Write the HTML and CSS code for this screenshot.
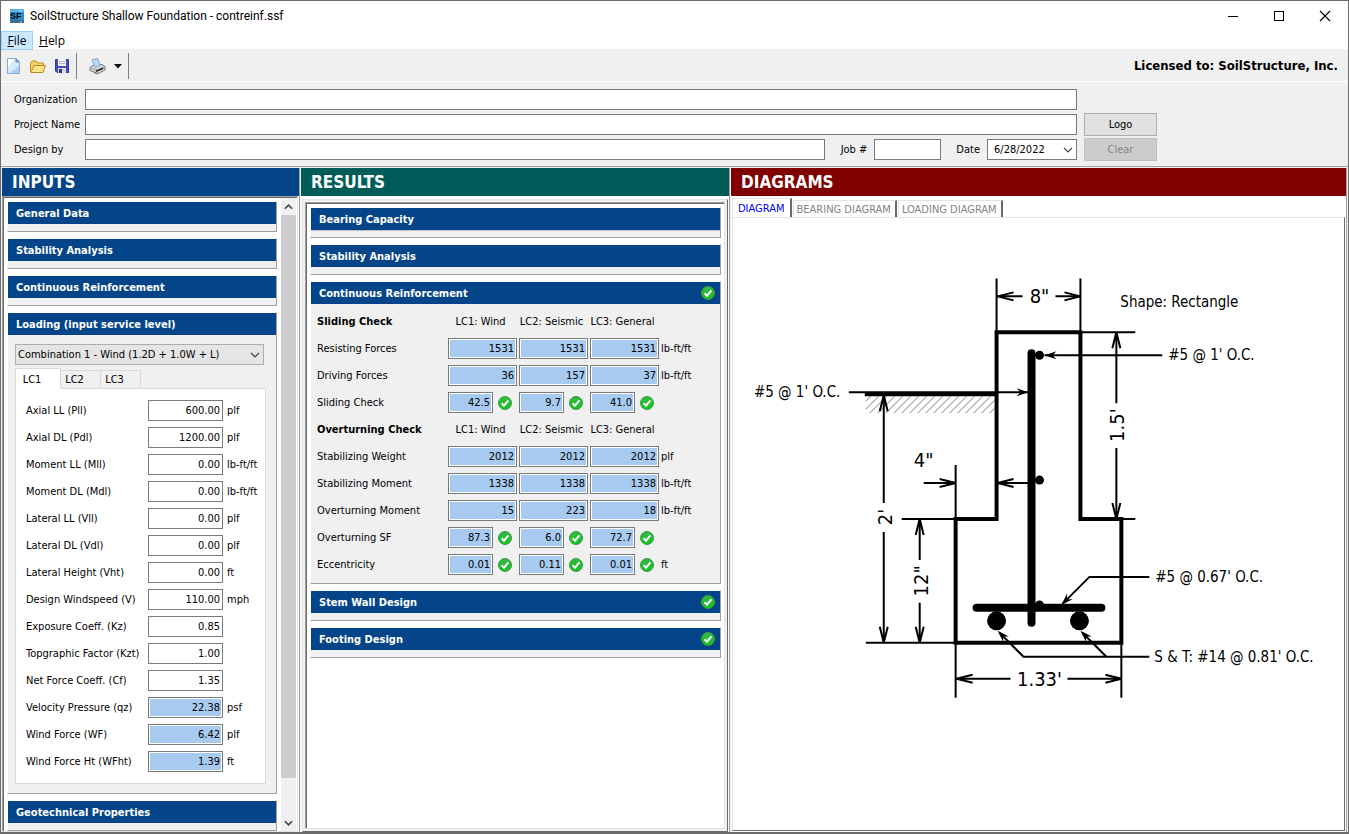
FILE: index.html
```html
<!DOCTYPE html>
<html lang="en">
<head>
<meta charset="utf-8">
<title>SoilStructure Shallow Foundation - contreinf.ssf</title>
<link rel="stylesheet" href="styles.css">
</head>
<body>
<svg class="defs" width="0" height="0" aria-hidden="true">
  <defs>
    <linearGradient id="green" x1="0" y1="0" x2="0" y2="1"><stop offset="0" stop-color="#35b845"/><stop offset="1" stop-color="#12c41c"/></linearGradient>
    <symbol id="ok" viewBox="0 0 14 14">
      <circle cx="7" cy="7" r="6.5" fill="url(#green)" stroke="#3f9a45"/>
      <path d="M3.6 7.2 6 9.7 10.4 4.4" fill="none" stroke="#fff" stroke-width="2"/>
    </symbol>
    <symbol id="chev" viewBox="0 0 10 6"><path d="M1 1 5 5 9 1" fill="none" stroke="currentColor" stroke-width="1.2"/></symbol>
  </defs>
</svg>
<div class="window">
  <header class="titlebar">
    <svg class="app-icon" width="14" height="14" viewBox="0 0 14 14">
      <rect width="14" height="14" fill="#2a8fc8"/><rect width="14" height="3" fill="#5ab4e0"/><rect y="11" width="14" height="3" fill="#3a6e94"/>
      <path d="M9 1 12 3M11 14V12" stroke="#c8e4f4"/>
      <text x="0" y="10" font-family="Liberation Sans, sans-serif" font-weight="bold" font-size="9" fill="#000">SF</text>
    </svg>
    <h1>SoilStructure Shallow Foundation - contreinf.ssf</h1>
    <div class="win-buttons">
      <button aria-label="Minimize"><svg width="12" height="12" viewBox="0 0 12 12"><path d="M1 6.500H11" stroke="#000"/></svg></button>
      <button aria-label="Maximize"><svg width="12" height="12" viewBox="0 0 12 12"><rect x="1.500" y="1.500" width="9" height="9" fill="none" stroke="#000"/></svg></button>
      <button aria-label="Close"><svg width="12" height="12" viewBox="0 0 12 12"><path d="M1 1 11 11M11 1 1 11" stroke="#000" stroke-width="1.100"/></svg></button>
    </div>
  </header>
  <nav class="menu">
    <button class="active"><u>F</u>ile</button>
    <button><u>H</u>elp</button>
  </nav>
  <div class="toolbar">
    <button aria-label="New"><svg width="16" height="16" viewBox="0 0 16 16"><path d="M1.500.5H10L13.500 4V15.500H1.500Z" fill="#d4e9fb" stroke="#8aa9cc"/><path d="M2 1H8L2 9Z" fill="#fff"/><path d="M13 8V15H4Z" fill="#a9cff5"/><path d="M10 .5V4H13.500" fill="#5f93c9" stroke="#5f93c9"/></svg></button>
    <button aria-label="Open"><svg width="16" height="16" viewBox="0 0 16 16"><path d="M.5 13.500V4.500L2 3H6L7.500 5H13.500V8" fill="#f5d469" stroke="#b98d1b"/><path d="M.8 14.500 4 7.500H15.500L13 14.500Z" fill="#ffe48a" stroke="#b98d1b"/></svg></button>
    <button aria-label="Save"><svg width="16" height="16" viewBox="0 0 16 16"><path d="M1.500 1.500H14.500V14.500H3L1.500 13Z" fill="#4a4fbf" stroke="#34389a"/><path d="M4 1H12V8H4Z" fill="#f2f2f8"/><path d="M5 3.500H11M5 5.500H11" stroke="#b4b4c4"/><path d="M4 10H12V15H4Z" fill="#dcdce8"/><path d="M5 11H8V15H5Z" fill="#30348c"/></svg></button>
    <span class="sep"></span>
    <button class="print" aria-label="Print"><svg width="17" height="17" viewBox="0 0 17 17"><path d="M1 9.500 4.500 7 13 6.500 16 8.500V12L9 15.500 1 12.500Z" fill="#d9d9d9" stroke="#777"/><path d="M3 1.500 9 .8 11 7.500 6 9.500Z" fill="#b9d9f7" stroke="#8aa8cc"/><path d="M1.500 10 9 12.500 15.500 9" fill="none" stroke="#999"/><path d="M7 13.300 14 10.300" stroke="#222" stroke-width="1.600"/><path d="M3 13 6 15.500 9 16" fill="none" stroke="#888"/></svg></button>
    <button class="drop" aria-label="Print options"><svg width="8" height="5" viewBox="0 0 8 5"><path d="M0 0H8L4 4.500Z" fill="#111"/></svg></button>
    <span class="sep"></span>
    <strong class="license">Licensed to: SoilStructure, Inc.</strong>
  </div>

  <form class="project">
    <label for="org">Organization</label><input id="org" class="field">
    <span></span>
    <label for="prj">Project Name</label><input id="prj" class="field">
    <button type="button" class="btn">Logo</button>
    <label for="by">Design by</label>
    <div class="split">
      <input id="by" class="field by">
      <label for="job">Job #</label><input id="job" class="field job">
      <label for="date">Date</label>
      <span class="combo date"><input id="date" class="field" value="6/28/2022"><svg class="arrow" width="10" height="6"><use href="#chev"/></svg></span>
    </div>
    <button type="button" class="btn" disabled>Clear</button>
  </form>

  <main class="panes">
    <section class="pane inputs">
      <h2>INPUTS</h2>
      <div class="scroller">
        <div class="stack">
          <div class="group"><h3>General Data</h3></div>
          <div class="group"><h3>Stability Analysis</h3></div>
          <div class="group"><h3>Continuous Reinforcement</h3></div>
          <div class="group loading">
            <h3>Loading (input service level)</h3>
            <div class="combo load"><select aria-label="Load combination"><option>Combination 1 - Wind (1.2D + 1.0W + L)</option></select><svg class="arrow" width="10" height="6"><use href="#chev"/></svg></div>
            <div class="lc-tabs" role="tablist">
              <button role="tab" aria-selected="true">LC1</button><button role="tab">LC2</button><button role="tab">LC3</button>
            </div>
            <div class="sheet">
              <label for="f1">Axial LL (Pll)</label><input id="f1" class="field num" value="600.00"><span>plf</span>
              <label for="f2">Axial DL (Pdl)</label><input id="f2" class="field num" value="1200.00"><span>plf</span>
              <label for="f3">Moment LL (Mll)</label><input id="f3" class="field num" value="0.00"><span>lb-ft/ft</span>
              <label for="f4">Moment DL (Mdl)</label><input id="f4" class="field num" value="0.00"><span>lb-ft/ft</span>
              <label for="f5">Lateral LL (Vll)</label><input id="f5" class="field num" value="0.00"><span>plf</span>
              <label for="f6">Lateral DL (Vdl)</label><input id="f6" class="field num" value="0.00"><span>plf</span>
              <label for="f7">Lateral Height (Vht)</label><input id="f7" class="field num" value="0.00"><span>ft</span>
              <label for="f8">Design Windspeed (V)</label><input id="f8" class="field num" value="110.00"><span>mph</span>
              <label for="f9">Exposure Coeff. (Kz)</label><input id="f9" class="field num" value="0.85"><span></span>
              <label for="f10">Topgraphic Factor (Kzt)</label><input id="f10" class="field num" value="1.00"><span></span>
              <label for="f11">Net Force Coeff. (Cf)</label><input id="f11" class="field num" value="1.35"><span></span>
              <label for="f12">Velocity Pressure (qz)</label><input id="f12" class="field num calc" readonly value="22.38"><span>psf</span>
              <label for="f13">Wind Force (WF)</label><input id="f13" class="field num calc" readonly value="6.42"><span>plf</span>
              <label for="f14">Wind Force Ht (WFht)</label><input id="f14" class="field num calc" readonly value="1.39"><span>ft</span>
            </div>
          </div>
          <div class="group"><h3>Geotechnical Properties</h3></div>
        </div>
        <div class="scrollbar">
          <button aria-label="Scroll up"><svg width="9" height="6" viewBox="0 0 10 6"><path d="M1 5 5 1 9 5" fill="none" stroke="#444" stroke-width="1.800"/></svg></button>
          <div class="track"><div class="thumb"></div></div>
          <button aria-label="Scroll down"><svg width="9" height="6" viewBox="0 0 10 6"><path d="M1 1 5 5 9 1" fill="none" stroke="#444" stroke-width="1.800"/></svg></button>
        </div>
      </div>
    </section>

    <section class="pane results">
      <h2>RESULTS</h2>
      <div class="raised">
        <div class="sunken">
          <div class="group lined"><h3>Bearing Capacity</h3></div>
          <div class="group"><h3>Stability Analysis</h3></div>
          <div class="group checks">
            <h3>Continuous Reinforcement<svg class="ok"><use href="#ok"/></svg></h3>
            <table>
              <colgroup><col class="c-name"><col class="c-val"><col class="c-val"><col class="c-val"><col></colgroup>
              <tr><th scope="row" class="head">Sliding Check</th><th>LC1: Wind</th><th>LC2: Seismic</th><th>LC3: General</th><td></td></tr>
              <tr><th scope="row">Resisting Forces</th><td><input aria-label="Resisting Forces LC1" class="field num calc" readonly value="1531"></td><td><input aria-label="Resisting Forces LC2" class="field num calc" readonly value="1531"></td><td><input aria-label="Resisting Forces LC3" class="field num calc" readonly value="1531"></td><td>lb-ft/ft</td></tr>
              <tr><th scope="row">Driving Forces</th><td><input aria-label="Driving Forces LC1" class="field num calc" readonly value="36"></td><td><input aria-label="Driving Forces LC2" class="field num calc" readonly value="157"></td><td><input aria-label="Driving Forces LC3" class="field num calc" readonly value="37"></td><td>lb-ft/ft</td></tr>
              <tr class="short"><th scope="row">Sliding Check</th><td><input aria-label="Sliding Check LC1" class="field num calc" readonly value="42.5"><svg class="ok"><use href="#ok"/></svg></td><td><input aria-label="Sliding Check LC2" class="field num calc" readonly value="9.7"><svg class="ok"><use href="#ok"/></svg></td><td><input aria-label="Sliding Check LC3" class="field num calc" readonly value="41.0"><svg class="ok"><use href="#ok"/></svg></td><td></td></tr>
              <tr><th scope="row" class="head">Overturning Check</th><th>LC1: Wind</th><th>LC2: Seismic</th><th>LC3: General</th><td></td></tr>
              <tr><th scope="row">Stabilizing Weight</th><td><input aria-label="Stabilizing Weight LC1" class="field num calc" readonly value="2012"></td><td><input aria-label="Stabilizing Weight LC2" class="field num calc" readonly value="2012"></td><td><input aria-label="Stabilizing Weight LC3" class="field num calc" readonly value="2012"></td><td>plf</td></tr>
              <tr><th scope="row">Stabilizing Moment</th><td><input aria-label="Stabilizing Moment LC1" class="field num calc" readonly value="1338"></td><td><input aria-label="Stabilizing Moment LC2" class="field num calc" readonly value="1338"></td><td><input aria-label="Stabilizing Moment LC3" class="field num calc" readonly value="1338"></td><td>lb-ft/ft</td></tr>
              <tr><th scope="row">Overturning Moment</th><td><input aria-label="Overturning Moment LC1" class="field num calc" readonly value="15"></td><td><input aria-label="Overturning Moment LC2" class="field num calc" readonly value="223"></td><td><input aria-label="Overturning Moment LC3" class="field num calc" readonly value="18"></td><td>lb-ft/ft</td></tr>
              <tr class="short"><th scope="row">Overturning SF</th><td><input aria-label="Overturning SF LC1" class="field num calc" readonly value="87.3"><svg class="ok"><use href="#ok"/></svg></td><td><input aria-label="Overturning SF LC2" class="field num calc" readonly value="6.0"><svg class="ok"><use href="#ok"/></svg></td><td><input aria-label="Overturning SF LC3" class="field num calc" readonly value="72.7"><svg class="ok"><use href="#ok"/></svg></td><td></td></tr>
              <tr class="short"><th scope="row">Eccentricity</th><td><input aria-label="Eccentricity LC1" class="field num calc" readonly value="0.01"><svg class="ok"><use href="#ok"/></svg></td><td><input aria-label="Eccentricity LC2" class="field num calc" readonly value="0.11"><svg class="ok"><use href="#ok"/></svg></td><td><input aria-label="Eccentricity LC3" class="field num calc" readonly value="0.01"><svg class="ok"><use href="#ok"/></svg></td><td>ft</td></tr>
            </table>
          </div>
          <div class="group"><h3>Stem Wall Design<svg class="ok"><use href="#ok"/></svg></h3></div>
          <div class="group"><h3>Footing Design<svg class="ok"><use href="#ok"/></svg></h3></div>
        </div>
      </div>
    </section>

    <section class="pane diagrams">
      <h2>DIAGRAMS</h2>
      <div class="dia-tabs" role="tablist">
        <button role="tab" aria-selected="true">DIAGRAM</button><button role="tab">BEARING DIAGRAM</button><button role="tab">LOADING DIAGRAM</button>
      </div>
      <div class="canvas">
        <svg class="drawing" viewBox="733 218 612 612" role="img" aria-label="Footing cross section">
          <defs>
            <pattern id="hatch" x="865" y="394" width="8" height="8" patternUnits="userSpaceOnUse"><path d="M-1 9 9 -1M-1 1 1 -1M7 9 9 7" stroke="#555" stroke-width=".8"/></pattern>
            <!-- open dimension arrowhead, tip at the origin, pointing right -->
            <g id="head"><path d="M0 0-16 -4M0 0-16 4" fill="none" stroke="#000" stroke-width="2"/><path d="M0 0-8 -2.500V2.500Z"/></g>
            <g id="tip"><path d="M0 0-12 -4-8 0-12 4Z"/></g>
          </defs>
          <rect x="866" y="396" width="131" height="17" fill="url(#hatch)"/>
          <g fill="none" stroke="#000" stroke-width="4">
            <path d="M997 332H1081V519H1122V643H956V519H997Z"/>
            <path d="M865 394H997"/>
          </g>
          <g fill="none" stroke="#000" stroke-width="2">
            <path d="M997 278V332M1081 278V332M997 296H1023M1056 296H1081"/>
            <path d="M1081 332H1136M1122 519H1136M1117 332V403M1117 448V519"/>
            <path d="M1045 355H1163M849 392H1029"/>
            <path d="M884 396V503M884 532V643M866 643H956"/>
            <path d="M920 519V560M920 603V643M902 519H956"/>
            <path d="M924 483H956M956 465V519M997 483H1030"/>
            <path d="M956 643V698M1122 643V698M956 679H1011M1068 679H1122"/>
            <path d="M1063 604 1090 577H1150M1000 633 1024 657H1150M1083 633 1107 657"/>
          </g>
          <g fill="none" stroke="#000" stroke-width="8" stroke-linecap="round">
            <path d="M1032 353V623"/><path d="M977 608H1102"/>
          </g>
          <circle cx="997" cy="621" r="9.500"/><circle cx="1080" cy="621" r="9.500"/>
          <circle cx="1040" cy="355" r="4.500"/><circle cx="1040" cy="480" r="4.500"/><circle cx="1040" cy="605" r="4.500"/>
          <use href="#head" transform="translate(998 296) rotate(180)"/><use href="#head" x="1081" y="296"/>
          <use href="#head" x="956" y="483"/><use href="#head" transform="translate(998 483) rotate(180)"/>
          <use href="#head" transform="translate(1117 332) rotate(-90)"/><use href="#head" transform="translate(1117 519) rotate(90)"/>
          <use href="#head" transform="translate(884 395) rotate(-90)"/><use href="#head" transform="translate(884 643) rotate(90)"/>
          <use href="#head" transform="translate(920 519) rotate(-90)"/><use href="#head" transform="translate(920 643) rotate(90)"/>
          <use href="#head" transform="translate(957 679) rotate(180)"/><use href="#head" x="1122" y="679"/>
          <use href="#tip" x="1029" y="392"/><use href="#tip" transform="translate(1045 355) rotate(180)"/>
          <use href="#tip" transform="translate(1062 605) rotate(135)"/>
          <use href="#tip" transform="translate(998 631) rotate(-135)"/><use href="#tip" transform="translate(1081 631) rotate(-135)"/>
          <g class="dim">
            <text x="1040" y="303">8"</text>
            <text x="924" y="467">4"</text>
            <text x="1040" y="686">1.33'</text>
            <text transform="translate(1125 425) rotate(-90)">1.5'</text>
            <text transform="translate(892 517) rotate(-90)">2'</text>
            <text transform="translate(928 581) rotate(-90)">12"</text>
          </g>
          <g class="note">
            <text x="1121" y="307">Shape: Rectangle</text>
            <text x="1169" y="360">#5 @ 1' O.C.</text>
            <text x="754" y="397">#5 @ 1' O.C.</text>
            <text x="1156" y="582">#5 @ 0.67' O.C.</text>
            <text x="1155" y="662">S &amp; T: #14 @ 0.81' O.C.</text>
          </g>
        </svg>
      </div>
    </section>
  </main>
</div>
</body>
</html>
```
FILE: styles.css
```css
* { box-sizing: border-box; }
body { margin: 0; font: 11px/13px "DejaVu Sans Condensed", "DejaVu Sans", sans-serif; color: #000; }
button, input, select { font: inherit; color: inherit; margin: 0; }
button { padding: 0; border: 0; background: none; }
h1, h2, h3 { margin: 0; }
.defs { position: absolute; }

.window { display: flex; flex-direction: column; height: 100vh; background: #f0f0f0; border: 1px solid #6b6b6b; border-bottom-width: 2px; }

.titlebar { display: flex; align-items: center; height: 30px; background: #fff; padding-left: 9px; gap: 6px; }
.titlebar h1 { flex: 1; font: 12px/16px Roboto, "Open Sans", sans-serif; }
.win-buttons { display: flex; }
.win-buttons button { width: 46px; height: 29px; display: grid; place-items: center; }

.menu { display: flex; height: 18px; background: #fff; font: 12px/16px "Open Sans", sans-serif; }
.menu button { width: 32px; height: 19px; border: 1px solid transparent; }
.menu button + button { width: 38px; }
.menu .active { background: #cce8ff; border-color: #99d1ff; }

.toolbar { display: flex; align-items: center; height: 32px; padding: 2px 10px 0 5px; }
.toolbar button { width: 16px; height: 17px; margin-right: 8px; display: grid; place-items: center; }
.toolbar .sep { width: 1px; height: 26px; background: #808080; margin-right: 12px; }
.toolbar .print { width: 17px; }
.toolbar .drop { width: 8px; margin-right: 6px; }
.toolbar button:nth-child(3) { margin-right: 6px; }
.license { margin-left: auto; font-size: 13px; line-height: 16px; }

.project { display: grid; grid-template-columns: 71px minmax(0, 992px) 73px; grid-auto-rows: 21px; row-gap: 4px; align-items: center; padding: 7px 12px 6px 13px; border-top: 1px solid #fff; }
.field { width: 100%; height: 21px; padding: 0 3px; border: 1px solid #7a7a7a; border-radius: 0; background: #fff; }
.split { display: flex; align-items: center; min-width: 0; }
.split .by { flex: 1; min-width: 0; margin-right: 16px; }
.split label { white-space: nowrap; margin-right: 7px; }
.split .job { width: 67px; margin-right: 15px; }
.date { width: 90px; }
.date .field { padding-left: 6px; }
.combo { display: block; position: relative; }
.combo .arrow { position: absolute; right: 4px; top: 50%; margin-top: -3px; color: #444; }
.btn { height: 23px; margin-left: 7px; margin-right: -7px; background: #e1e1e1; border: 1px solid #adadad; }
.btn:disabled { background: #ccc; border-color: #bfbfbf; color: #838383; }

.panes { flex: 1; min-height: 0; display: grid; grid-template-columns: 299px 430px minmax(0, 1fr); grid-template-rows: minmax(0, 1fr); border-top: 1px solid #a0a0a0; padding: 1px 1px 0; }
.pane { display: flex; flex-direction: column; min-width: 0; border-right: 1px solid #a0a0a0; margin-right: 1px; background: #fff; }
.pane h2 { padding: 0 10px; font-size: 17px; line-height: 28px; color: #fff; flex: none; }
.inputs h2 { background: #04458a; }
.results h2 { background: #005c58; }
.diagrams h2 { background: #800000; }
.diagrams { margin-right: 0; }

.scroller { flex: 1; min-height: 0; display: flex; overflow: hidden; border: 1px solid #a0a0a0; border-right-color: #e3e3e3; border-bottom-color: #e3e3e3; box-shadow: inset 1px 1px #696969; margin-right: 1px; padding: 1px 1px 0; }
.stack { flex: 1; min-width: 0; padding: 3px 4px 0 3px; overflow: hidden; }
.group { border: 1px solid; border-color: #fff #a0a0a0 #a0a0a0 #fff; background: #f0f0f0; margin-bottom: 6px; padding-bottom: 7px; background-clip: padding-box; }
.group h3 { display: flex; justify-content: space-between; align-items: center; padding: 0 5px 0 8px; height: 22px; background: #04458a; color: #fff; font-size: 11px; }
.ok { width: 14px; height: 14px; flex: none; }
.lined h3 { box-shadow: 0 1px #c0c0c0; }

.loading { padding-bottom: 9px; }
.load { margin: 9px 12px 3px 7px; }
.load select { width: 100%; height: 21px; appearance: none; padding: 0 2px; border: 1px solid #adadad; border-radius: 0; background: #e5e5e5; }
.lc-tabs { display: flex; align-items: flex-end; margin-left: 7px; height: 20px; }
.lc-tabs button { width: 40px; height: 18px; padding-right: 12px; border: 1px solid #d9d9d9; border-width: 1px 1px 0 0; }
.lc-tabs [aria-selected] { width: 46px; height: 21px; margin-bottom: -1px; background: #fff; border-left-width: 1px; position: relative; }
.sheet { display: grid; grid-template-columns: 122px 75px 1fr; grid-auto-rows: 21px; row-gap: 6px; align-items: center; margin: 0 10px 0 7px; padding: 11px 0 11px 10px; background: #fff; border: 1px solid #d9d9d9; }
.sheet label, .sheet span { white-space: nowrap; }
.sheet span { padding-left: 4px; }
.num { text-align: right; padding-right: 2px; }
.calc { background: #a6caf0; border-color: #7a7a7a; box-shadow: inset 0 0 0 1px #fff; }

.scrollbar { width: 15px; display: flex; flex-direction: column; background: #f0f0f0; }
.scrollbar button { height: 17px; display: grid; place-items: center; }
.track { flex: 1; }
.thumb { height: 94%; background: #cdcdcd; }

.raised { flex: 1; min-height: 0; display: flex; margin: 3px 1px 0; padding: 2px; background: #f0f0f0; border: 1px solid #e3e3e3; border-right-color: #696969; border-bottom-color: #696969; }
.sunken { flex: 1; min-width: 0; background: #fff; border: 1px solid #a0a0a0; border-right-color: #e3e3e3; border-bottom-color: #e3e3e3; box-shadow: inset 1px 1px #696969; padding: 4px 3px 0 4px; }
.checks { padding-bottom: 5px; }
table { width: 100%; table-layout: fixed; border-spacing: 0; margin-top: 4px; }
.c-name { width: 137px; }
.c-val { width: 71px; }
tr { height: 27px; }
th, td { padding: 0; font-weight: normal; text-align: left; white-space: nowrap; vertical-align: middle; }
th { text-align: center; padding-right: 6px; }
th[scope="row"] { text-align: left; padding-left: 6px; }
th.head { font-weight: bold; }
td .field { width: 69px; vertical-align: middle; }
.short td .field { width: 45px; }
td .ok { margin-left: 5px; vertical-align: middle; }

.dia-tabs { display: flex; align-items: flex-end; height: 21px; padding-left: 1px; color: #838383; }
.dia-tabs button { height: 17px; margin-right: 1px; padding: 0 4px 0 3px; border: 1px solid #e3e3e3; border-right: 2px solid #696969; border-bottom: 0; white-space: nowrap; }
.dia-tabs [aria-selected] { height: 19px; padding: 0 5px; color: #00f; }
.canvas { flex: 1; min-height: 0; border: 1px solid #e3e3e3; border-right-color: #696969; border-bottom-color: #696969; margin: 0 1px 1px; }
.drawing { display: block; width: 100%; height: 100%; }
.dim { font-size: 20px; text-anchor: middle; }
.note { font-size: 15px; }
```
